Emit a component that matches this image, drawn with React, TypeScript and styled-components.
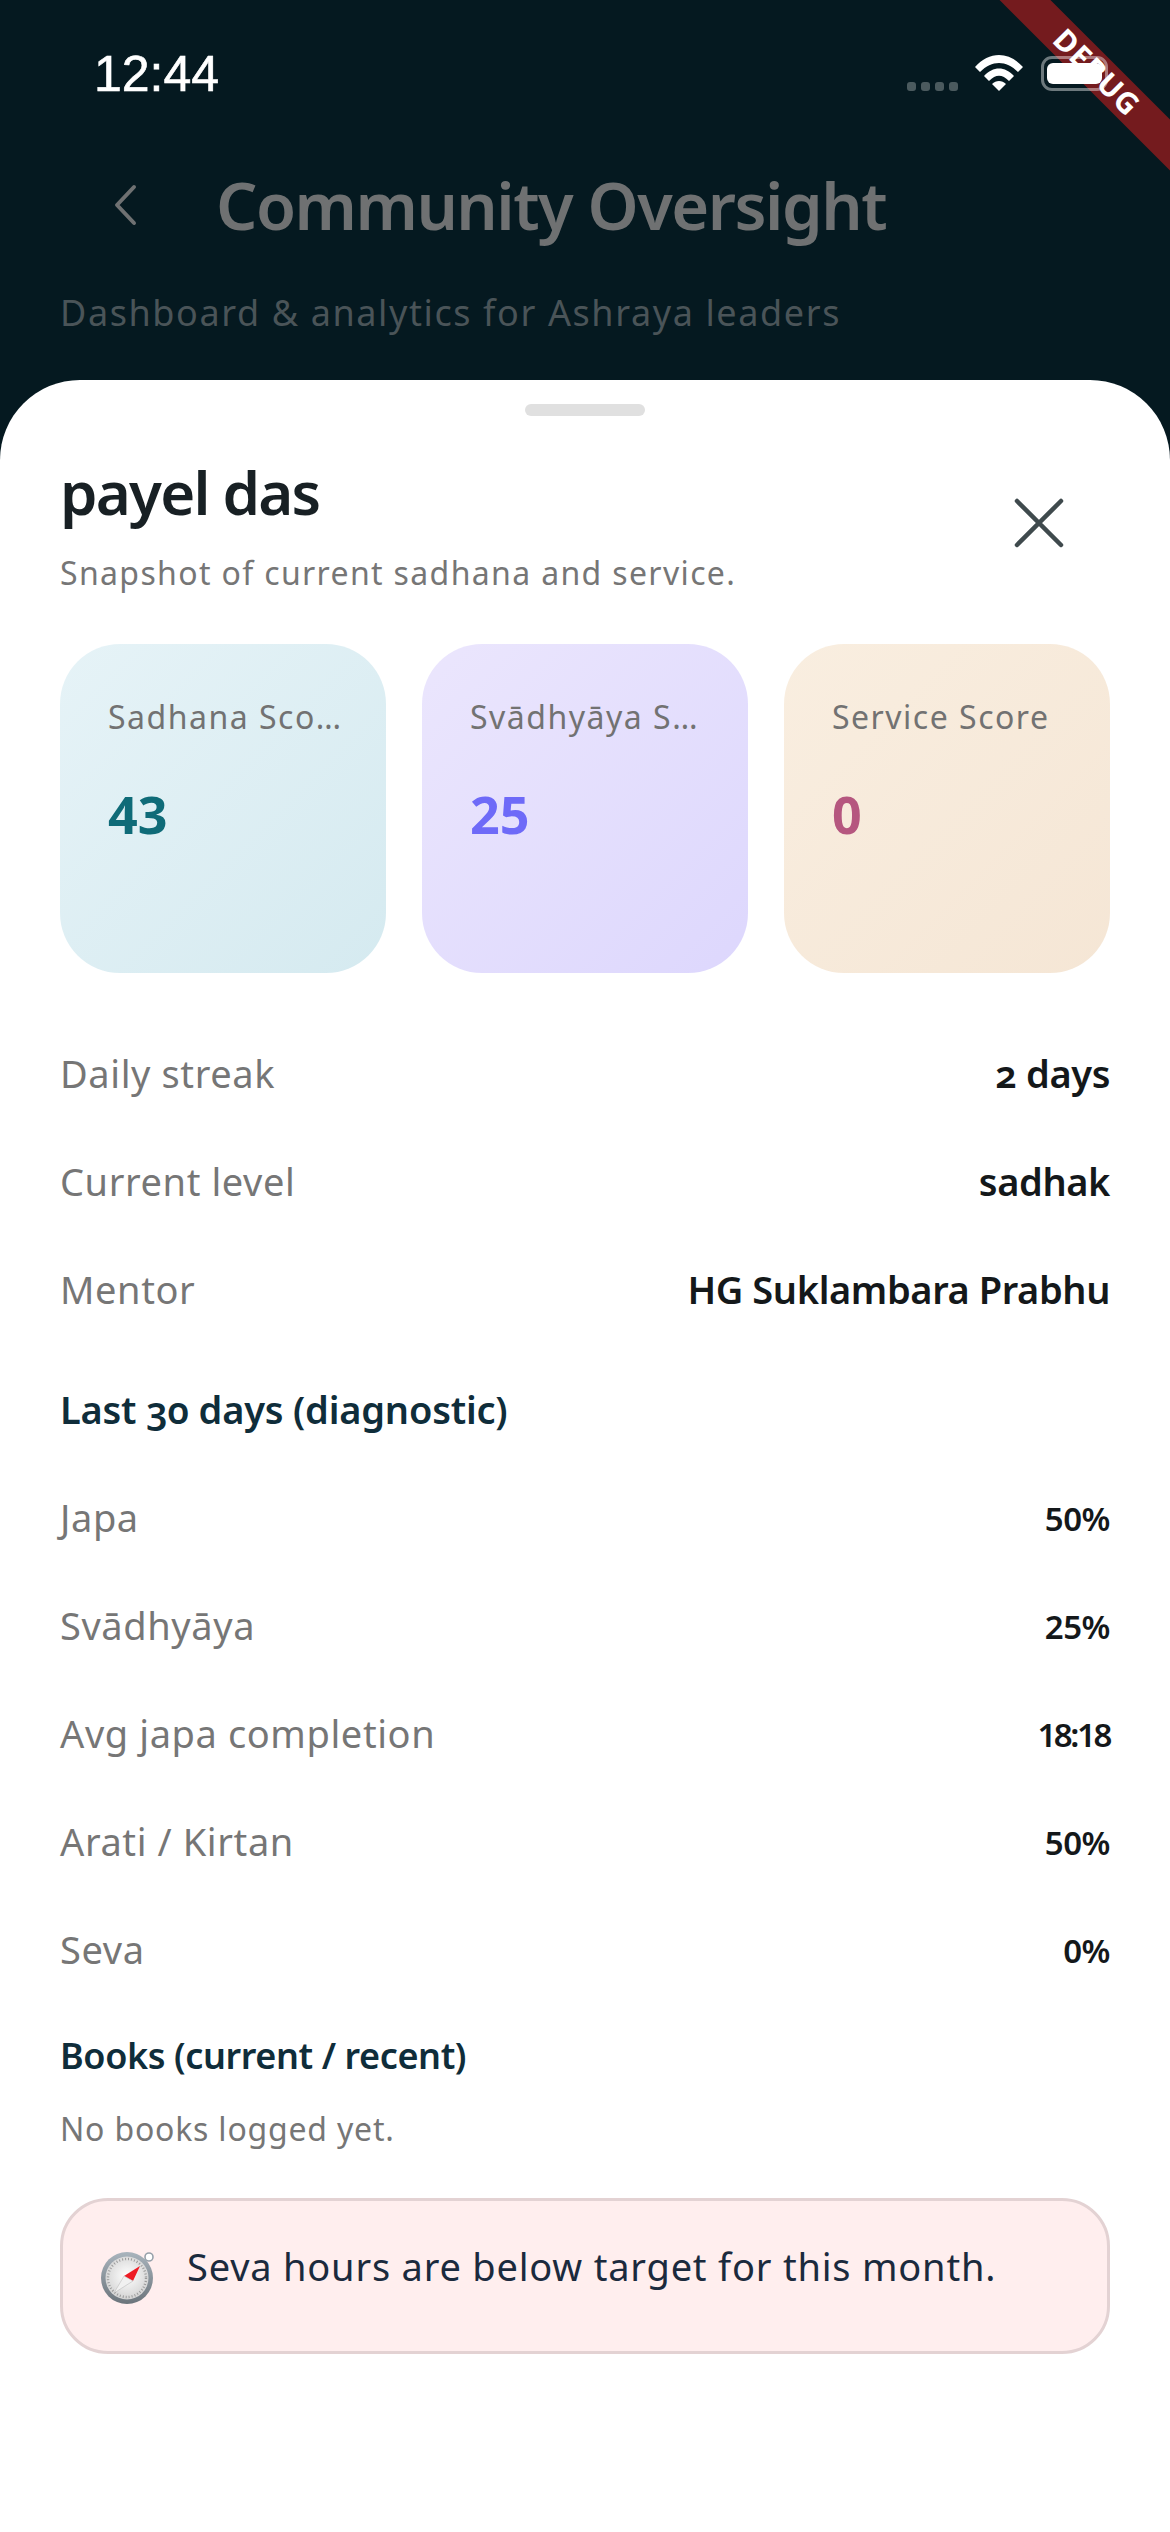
import styled, { createGlobalStyle } from "styled-components";

const GlobalStyle = createGlobalStyle`
  html, body {
    margin: 0;
    padding: 0;
    background: #ffffff;
  }
  * {
    box-sizing: border-box;
  }
`;

const FONT = `"Noto Sans", "Open Sans", sans-serif`;

const snapshotRows = [
  { label: "Daily streak", value: "2 days", oldStyle: true },
  { label: "Current level", value: "sadhak", oldStyle: false },
  { label: "Mentor", value: "HG Suklambara Prabhu", oldStyle: false },
];

const diagnosticRows = [
  { label: "Japa", value: "50%", tight: false },
  { label: "Svādhyāya", value: "25%", tight: false },
  { label: "Avg japa completion", value: "18:18", tight: true },
  { label: "Arati / Kirtan", value: "50%", tight: false },
  { label: "Seva", value: "0%", tight: false },
];

const scoreCards = [
  { label: "Sadhana Score", value: "43", from: "#e6f3f7", to: "#d5eaf0", color: "#0f6b78" },
  { label: "Svādhyāya Score", value: "25", from: "#ebe6fd", to: "#ddd7fd", color: "#6e6af8" },
  { label: "Service Score", value: "0", from: "#f9eee0", to: "#f5e6d5", color: "#b5577f" },
];

const WifiIcon = () => (
  <svg width="48" height="36" viewBox="0 0 48 36">
    <path d="M0 12 C14 -4 34 -4 48 12 L43 17 C31 5 17 5 5 17 Z" fill="#fff" />
    <path d="M9 21 C18 11 30 11 39 21 L34 26 C27 19 21 19 14 26 Z" fill="#fff" />
    <path d="M17 29 C21 25 27 25 31 29 L24 36 Z" fill="#fff" />
  </svg>
);

const CompassIcon = () => (
  <svg width="56" height="56" viewBox="0 0 56 56">
    <defs>
      <radialGradient id="dial" cx="50%" cy="45%" r="60%">
        <stop offset="0%" stopColor="#ffffff" />
        <stop offset="100%" stopColor="#cfcfcf" />
      </radialGradient>
      <linearGradient id="rim" x1="0" y1="0" x2="0" y2="1">
        <stop offset="0%" stopColor="#a9b4bd" />
        <stop offset="100%" stopColor="#6b747b" />
      </linearGradient>
    </defs>
    <circle cx="48" cy="9" r="4" fill="#fff" stroke="#97a1aa" strokeWidth="1.6" />
    <circle cx="26" cy="30" r="26" fill="url(#rim)" />
    <circle cx="26" cy="30" r="21.5" fill="url(#dial)" />
    <circle cx="26" cy="30" r="19" fill="none" stroke="#9a9a9a" strokeWidth="2.4" strokeDasharray="1 2" />
    <path d="M39 18 L32 33 L23 28 Z" fill="#ee1c25" />
    <path d="M13 45 L23 28 L32 33 Z" fill="#f1f1f1" stroke="#b5b5b5" strokeWidth="0.5" />
  </svg>
);

const App = () => {
  return (
    <Page>
      <GlobalStyle />
      <DebugBanner>
        <span>DEBUG</span>
      </DebugBanner>
      <Header>
        <StatusBar>
          <Clock>12:44</Clock>
          <StatusIcons>
            <SignalDots>
              <i />
              <i />
              <i />
              <i />
            </SignalDots>
            <WifiIcon />
            <Battery>
              <BatteryFill />
            </Battery>
          </StatusIcons>
        </StatusBar>
        <TitleRow>
          <svg width="26" height="42" viewBox="0 0 26 42" fill="none">
            <path d="M22 3 L5 21 L22 39" stroke="#6f7172" strokeWidth="4" strokeLinecap="round" strokeLinejoin="round" />
          </svg>
          <PageTitle>Community Oversight</PageTitle>
        </TitleRow>
        <PageSubtitle>Dashboard &amp; analytics for Ashraya leaders</PageSubtitle>
      </Header>

      <Sheet>
        <Handle />
        <SheetTop>
          <div>
            <Name>payel das</Name>
            <Snapshot>Snapshot of current sadhana and service.</Snapshot>
          </div>
          <CloseButton type="button">
            <svg width="50" height="50" viewBox="0 0 50 50" fill="none">
              <path d="M3 3 L47 47 M47 3 L3 47" stroke="#3f4a4d" strokeWidth="4.5" strokeLinecap="round" />
            </svg>
          </CloseButton>
        </SheetTop>

        <Cards>
          {scoreCards.map(card => (
            <Card key={card.label} $from={card.from} $to={card.to}>
              <CardLabel>{card.label}</CardLabel>
              <CardValue $color={card.color}>{card.value}</CardValue>
            </Card>
          ))}
        </Cards>

        <Rows>
          {snapshotRows.map(row => (
            <Row key={row.label}>
              <RowLabel>{row.label}</RowLabel>
              <RowValue $oldStyle={row.oldStyle}>{row.value}</RowValue>
            </Row>
          ))}
        </Rows>

        <SectionTitle>Last 30 days (diagnostic)</SectionTitle>

        <Rows>
          {diagnosticRows.map(row => (
            <Row key={row.label}>
              <RowLabel>{row.label}</RowLabel>
              <SmallValue $tight={row.tight}>{row.value}</SmallValue>
            </Row>
          ))}
        </Rows>

        <BooksTitle>Books (current / recent)</BooksTitle>
        <NoBooks>No books logged yet.</NoBooks>

        <Alert>
          <CompassIcon />
          <AlertText>Seva hours are below target for this month.</AlertText>
        </Alert>
      </Sheet>
    </Page>
  );
};

const Page = styled.div`
  position: relative;
  width: 1170px;
  height: 2532px;
  overflow: hidden;
  background: #051920;
  font-family: ${FONT};
  display: flex;
  flex-direction: column;
`;

const DebugBanner = styled.div`
  position: absolute;
  top: 54px;
  right: -127px;
  width: 400px;
  height: 36px;
  transform: rotate(45deg);
  background: rgba(183, 28, 28, 0.627);
  color: #fff;
  display: flex;
  align-items: center;
  justify-content: center;
  z-index: 5;

  span {
    font-family: ${FONT};
    font-weight: 700;
    font-size: 30px;
    line-height: 36px;
    letter-spacing: 1px;
  }
`;

const Header = styled.div`
  height: 380px;
  flex: none;
  padding: 0 60px;
`;

const StatusBar = styled.div`
  height: 165px;
  display: flex;
  justify-content: space-between;
  align-items: flex-start;
  padding: 46px 2px 0 34px;
`;

const Clock = styled.div`
  font-family: "Liberation Sans", sans-serif;
  font-size: 50px;
  line-height: 56px;
  font-weight: 400;
  color: #fff;
  -webkit-text-stroke: 0.6px #fff;
`;

const StatusIcons = styled.div`
  position: relative;
  z-index: 6;
  display: flex;
  align-items: flex-end;
  margin-top: 9px;
`;

const SignalDots = styled.div`
  display: flex;
  gap: 5px;
  margin-right: 17px;

  i {
    display: block;
    width: 9px;
    height: 9px;
    border-radius: 3px;
    background: #4b5a5e;
  }
`;

const Battery = styled.div`
  width: 67px;
  height: 35px;
  margin-left: 18px;
  border: 3px solid rgba(255, 255, 255, 0.42);
  border-radius: 11px;
  padding: 4px 3px;
`;

const BatteryFill = styled.div`
  width: 55px;
  height: 21px;
  background: #fff;
  border-radius: 6px;
`;

const TitleRow = styled.div`
  display: flex;
  align-items: center;
  height: 80px;
  padding-left: 52px;
  gap: 78px;
`;

const PageTitle = styled.div`
  font-size: 65px;
  line-height: 80px;
  font-weight: 600;
  color: #6f7172;
  letter-spacing: -1.5px;
`;

const PageSubtitle = styled.div`
  margin-top: 44px;
  font-size: 36px;
  line-height: 48px;
  color: #4a5458;
  letter-spacing: 1.6px;
`;

const Sheet = styled.div`
  flex: 1;
  background: #fff;
  border-radius: 80px 80px 0 0;
  padding: 24px 60px 0;
  display: flex;
  flex-direction: column;
`;

const Handle = styled.div`
  width: 120px;
  height: 12px;
  border-radius: 6px;
  background: #e0e0e0;
  align-self: center;
  flex: none;
`;

const SheetTop = styled.div`
  display: flex;
  justify-content: space-between;
  align-items: flex-start;
  margin-top: 36px;
`;

const Name = styled.div`
  font-size: 60px;
  line-height: 80px;
  font-weight: 600;
  color: #182024;
  letter-spacing: -1.8px;
`;

const Snapshot = styled.div`
  margin-top: 19px;
  font-size: 32px;
  line-height: 44px;
  color: #767676;
  letter-spacing: 1.35px;
`;

const CloseButton = styled.button`
  background: none;
  border: none;
  padding: 0;
  margin: 46px 46px 0 0;
  display: flex;
`;

const Cards = styled.div`
  margin-top: 49px;
  display: grid;
  grid-template-columns: repeat(3, 326px);
  justify-content: space-between;
`;

const Card = styled.div<{ $from: string; $to: string }>`
  height: 329px;
  border-radius: 60px;
  padding: 51px 44px 0 48px;
  background: linear-gradient(135deg, ${p => p.$from}, ${p => p.$to});
`;

const CardLabel = styled.div`
  font-size: 32px;
  line-height: 44px;
  color: #727272;
  letter-spacing: 1.5px;
  white-space: nowrap;
  overflow: hidden;
  text-overflow: ellipsis;
`;

const CardValue = styled.div<{ $color: string }>`
  margin-top: 43px;
  font-size: 52px;
  line-height: 64px;
  font-weight: 700;
  color: ${p => p.$color};
`;

const Rows = styled.div`
  display: flex;
  flex-direction: column;
  margin-top: 46px;
`;

const Row = styled.div`
  height: 108px;
  display: flex;
  justify-content: space-between;
  align-items: center;
`;

const RowLabel = styled.div`
  font-size: 38px;
  color: #767676;
  letter-spacing: 0.6px;
`;

const RowValue = styled.div<{ $oldStyle: boolean }>`
  font-size: 38px;
  font-weight: 600;
  color: #14181a;
  letter-spacing: -0.4px;
  font-variant-numeric: ${p => (p.$oldStyle ? "oldstyle-nums" : "normal")};
`;

const SmallValue = styled.div<{ $tight: boolean }>`
  font-size: 33px;
  font-weight: 600;
  color: #14181a;
  margin-top: 2px;
  letter-spacing: ${p => (p.$tight ? "-2.4px" : "-0.5px")};
`;

const SectionTitle = styled.div`
  margin-top: 38px;
  margin-bottom: -20px;
  font-size: 38px;
  line-height: 56px;
  font-weight: 600;
  color: #0f2d3a;
  letter-spacing: -0.2px;
  font-variant-numeric: oldstyle-nums;
`;

const BooksTitle = styled.div`
  margin-top: 29px;
  font-size: 36px;
  line-height: 48px;
  font-weight: 600;
  color: #0f2d3a;
  letter-spacing: -0.4px;
`;

const NoBooks = styled.div`
  margin-top: 27px;
  font-size: 32px;
  line-height: 44px;
  color: #767676;
  letter-spacing: 0.8px;
`;

const Alert = styled.div`
  margin-top: 47px;
  height: 156px;
  border: 3px solid #e3d2d3;
  border-radius: 48px;
  background: #ffeeee;
  display: flex;
  align-items: flex-start;
  padding: 47px 36px 0 38px;
  gap: 30px;
`;

const AlertText = styled.div`
  font-size: 38px;
  line-height: 52px;
  margin-top: -8px;
  color: #1b2a3d;
  letter-spacing: 0.8px;
`;

export default App;
